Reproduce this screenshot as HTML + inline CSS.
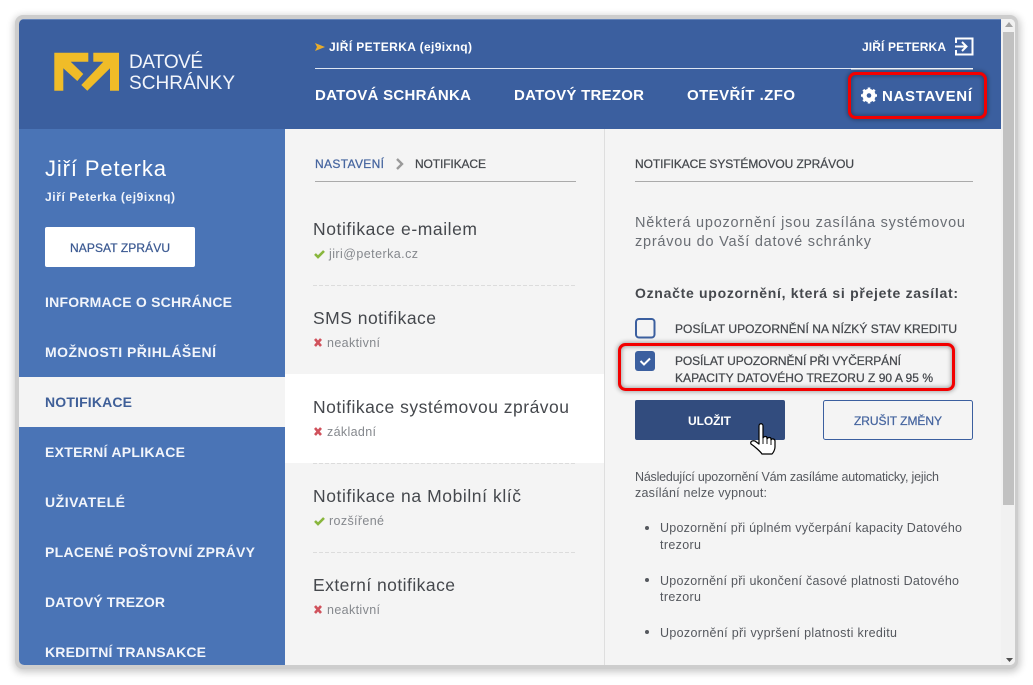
<!DOCTYPE html>
<html lang="cs"><head><meta charset="utf-8"><title>Notifikace</title>
<style>
html,body{margin:0;padding:0;background:#fff;width:1033px;height:685px;overflow:hidden}
svg{display:block;position:absolute;left:0;top:0}
text{font-family:"Liberation Sans",sans-serif;white-space:pre}
.b{font-weight:700}
.w{fill:#fff}
.nav{font-size:15px;font-weight:700;fill:#fff}
.menu{font-size:14px;font-weight:700;fill:#f2f5fb}
.item{font-size:17.5px;fill:#45484d}
.sub{font-size:12.5px;fill:#85888d}
.txt{font-size:12.5px;fill:#55585e}
.lab{font-size:12px;fill:#45484d;stroke:#45484d;stroke-width:.25px}
.m{stroke-width:.25px}
</style></head><body>
<svg width="1033" height="685" viewBox="0 0 1033 685" xmlns="http://www.w3.org/2000/svg">
<defs>
<filter id="sh" x="-5%" y="-5%" width="110%" height="110%"><feGaussianBlur stdDeviation="4"/></filter>
<filter id="rs" x="-20%" y="-30%" width="140%" height="160%"><feGaussianBlur stdDeviation="2.5"/></filter>
<clipPath id="win"><rect x="19" y="19" width="996" height="646" rx="5"/></clipPath>
</defs>
<rect x="14" y="16" width="1006" height="656" rx="9" fill="#000" opacity=".22" filter="url(#sh)"/>
<rect x="15" y="15" width="1003" height="654" rx="8" fill="#cdcdcd"/>
<g clip-path="url(#win)">
<rect x="19" y="19" width="996" height="646" fill="#f4f4f4"/>
<!-- header -->
<rect x="19" y="19" width="982" height="110" fill="#3b5f9f"/>
<rect x="19" y="19" width="982" height="1" fill="#6483b8"/>
<!-- sidebar -->
<rect x="19" y="129" width="266" height="536" fill="#4a74b6"/>
<rect x="19" y="377" width="266" height="50" fill="#f4f4f4"/>
<rect x="285" y="374" width="319" height="89" fill="#fff"/>
<rect x="604" y="129" width="1" height="536" fill="#dedede"/>
<!-- scrollbar -->
<rect x="1001" y="19" width="14" height="646" fill="#f1f1f1"/>
<rect x="1003" y="32" width="11" height="473" fill="#c1c1c1"/>
<path d="M1009 22l4 5h-8z" fill="#a3a3a3"/>
<path d="M1006 658h7l-3.500 4z" fill="#505050"/>
</g>
<!-- logo -->
<path fill="#f0bc28" d="M54.300 52.700H88.300V61.700H70.700L83.300 74L77.300 81L63.300 68.300V90.700H54.300Z"/>
<path fill="#f0bc28" d="M93.300 52.700H119V90.700H110V68.300L87.300 90.700L81.300 85L103.300 61.700H93.300Z"/>
<text x="129" y="68" font-size="19" fill="#f2f5fb" textLength="74">DATOVÉ</text>
<text x="129" y="89" font-size="19" fill="#f2f5fb" textLength="106">SCHRÁNKY</text>
<!-- top row -->
<path d="M315 43L325 47L315 51L317 47Z" fill="#e8ac2c"/>
<text x="329" y="51" font-size="12" class="b w" textLength="143">JIŘÍ PETERKA (ej9ixnq)</text>
<text x="862" y="51" font-size="12" class="b w" textLength="84">JIŘÍ PETERKA</text>
<path d="M956 43V38.500H972.500V54.500H956V50" fill="none" stroke="#fff" stroke-width="2"/>
<path d="M955 46.500H966M962 42L966.500 46.500L962 51" fill="none" stroke="#fff" stroke-width="2"/>
<rect x="315" y="68" width="536" height="1" fill="#dfe6f2"/>
<rect x="851" y="68" width="122" height="1.500" fill="#fff"/>
<text x="315" y="100" class="nav" textLength="156">DATOVÁ SCHRÁNKA</text>
<text x="514" y="100" class="nav" textLength="130">DATOVÝ TREZOR</text>
<text x="687" y="100" class="nav" textLength="108">OTEVŘÍT .ZFO</text>
<text x="882" y="101" class="nav" textLength="90">NASTAVENÍ</text>
<!-- gear -->
<circle cx="869" cy="95.500" r="5" fill="none" stroke="#fff" stroke-width="3.200"/>
<path d="M869 87.500V103.500M861 95.500H877M863.300 89.800L874.700 101.200M874.700 89.800L863.300 101.200" stroke="#fff" stroke-width="2.600"/>
<circle cx="869" cy="95.500" r="2.300" fill="#3b5f9f"/>
<!-- red box nav -->
<rect x="849.500" y="73.500" width="136" height="44" rx="6" fill="none" stroke="#000" stroke-opacity=".4" stroke-width="4" filter="url(#rs)"/>
<rect x="849.500" y="73.500" width="136" height="44" rx="6" fill="none" stroke="#f30000" stroke-width="3"/>
<!-- sidebar text -->
<text x="45" y="176" font-size="22" fill="#fff" textLength="121">Jiří Peterka</text>
<text x="45" y="201" font-size="12" class="b" fill="#f2f5fb" textLength="130">Jiří Peterka (ej9ixnq)</text>
<rect x="45" y="227" width="150" height="40" rx="2" fill="#fff"/>
<text x="70" y="252" font-size="12" class="m" fill="#3c5a92" stroke="#3c5a92" textLength="100">NAPSAT ZPRÁVU</text>
<text x="45" y="307" class="menu" textLength="187">INFORMACE O SCHRÁNCE</text>
<text x="45" y="357" class="menu" textLength="171">MOŽNOSTI PŘIHLÁŠENÍ</text>
<text x="45" y="407" class="menu" style="fill:#3f5f98" textLength="87">NOTIFIKACE</text>
<text x="45" y="457" class="menu" textLength="140">EXTERNÍ APLIKACE</text>
<text x="45" y="507" class="menu" textLength="80">UŽIVATELÉ</text>
<text x="45" y="557" class="menu" textLength="210">PLACENÉ POŠTOVNÍ ZPRÁVY</text>
<text x="45" y="607" class="menu" textLength="120">DATOVÝ TREZOR</text>
<text x="45" y="657" class="menu" textLength="161">KREDITNÍ TRANSAKCE</text>
<!-- breadcrumb -->
<text x="315" y="168" font-size="12" class="m" fill="#46659f" stroke="#46659f" textLength="69">NASTAVENÍ</text>
<path d="M397 159L402 164L397 169" fill="none" stroke="#9a9a9a" stroke-width="2.400"/>
<text x="415" y="168" font-size="12" class="m" fill="#45484d" stroke="#45484d" textLength="71">NOTIFIKACE</text>
<rect x="315" y="181" width="261" height="1" fill="#aaa"/>
<!-- list -->
<text x="313" y="235" class="item" textLength="164">Notifikace e-mailem</text>
<path d="M315 254L318 257L324 251" fill="none" stroke="#88b63c" stroke-width="2.600"/>
<text x="329" y="258" class="sub" textLength="89">jiri@peterka.cz</text>
<path d="M313 285.500H576" stroke="#dcdcdc" stroke-dasharray="4 2"/>
<text x="313" y="324" class="item" textLength="123">SMS notifikace</text>
<path d="M315 339L321 346M321 339L315 346" stroke="#d0525c" stroke-width="2.600"/>
<text x="327" y="347" class="sub" textLength="53">neaktivní</text>
<text x="313" y="413" class="item" textLength="256">Notifikace systémovou zprávou</text>
<path d="M315 428L321 435M321 428L315 435" stroke="#d0525c" stroke-width="2.600"/>
<text x="327" y="436" class="sub" textLength="49">základní</text>
<path d="M313 463.500H576" stroke="#dcdcdc" stroke-dasharray="4 2"/>
<text x="313" y="502" class="item" textLength="208">Notifikace na Mobilní klíč</text>
<path d="M315 521L318 524L324 518" fill="none" stroke="#88b63c" stroke-width="2.600"/>
<text x="329" y="525" class="sub" textLength="55">rozšířené</text>
<path d="M313 552.500H576" stroke="#dcdcdc" stroke-dasharray="4 2"/>
<text x="313" y="591" class="item" textLength="142">Externí notifikace</text>
<path d="M315 606L321 613M321 606L315 613" stroke="#d0525c" stroke-width="2.600"/>
<text x="327" y="614" class="sub" textLength="53">neaktivní</text>
<!-- right -->
<text x="635" y="168" font-size="12" class="m" fill="#45484d" stroke="#45484d" textLength="219">NOTIFIKACE SYSTÉMOVOU ZPRÁVOU</text>
<rect x="635" y="181" width="338" height="1" fill="#aaa"/>
<text x="635" y="227" font-size="14.500" fill="#6a6e74" textLength="330">Některá upozornění jsou zasílána systémovou</text>
<text x="635" y="246" font-size="14.500" fill="#6a6e74" textLength="236">zprávou do Vaší datové schránky</text>
<text x="635" y="298" font-size="14" class="b" fill="#45484d" textLength="323">Označte upozornění, která si přejete zasílat:</text>
<rect x="636" y="319" width="18.500" height="18.500" rx="3" fill="none" stroke="#3b5f9f" stroke-width="2"/>
<text x="675" y="333" class="lab" textLength="282">POSÍLAT UPOZORNĚNÍ NA NÍZKÝ STAV KREDITU</text>
<rect x="635" y="351" width="20" height="20" rx="3" fill="#3b5f9f"/>
<path d="M640.500 361L644 364.500L650 358.500" fill="none" stroke="#fff" stroke-width="2"/>
<text x="675" y="365" class="lab" textLength="226">POSÍLAT UPOZORNĚNÍ PŘI VYČERPÁNÍ</text>
<text x="675" y="382" class="lab" textLength="258">KAPACITY DATOVÉHO TREZORU Z 90 A 95 %</text>
<rect x="619.500" y="344.500" width="334" height="45" rx="6" fill="none" stroke="#000" stroke-opacity=".4" stroke-width="4" filter="url(#rs)"/>
<rect x="619.500" y="344.500" width="334" height="45" rx="6" fill="none" stroke="#f30000" stroke-width="3"/>
<rect x="635" y="400" width="150" height="40" rx="2" fill="#324c7e"/>
<text x="688" y="425" font-size="12" class="b w" textLength="43">ULOŽIT</text>
<rect x="823.500" y="400.500" width="149" height="39" rx="2" fill="none" stroke="#3b5f9f"/>
<text x="854" y="425" font-size="12" class="m" fill="#46659f" stroke="#46659f" textLength="88">ZRUŠIT ZMĚNY</text>
<text x="635" y="481" class="txt" textLength="304">Následující upozornění Vám zasíláme automaticky, jejich</text>
<text x="635" y="497" class="txt" textLength="132">zasílání nelze vypnout:</text>
<circle cx="647" cy="528" r="2" fill="#55585e"/>
<text x="660" y="532" class="txt" textLength="302">Upozornění při úplném vyčerpání kapacity Datového</text>
<text x="660" y="549" class="txt" textLength="41">trezoru</text>
<circle cx="647" cy="580" r="2" fill="#55585e"/>
<text x="660" y="585" class="txt" textLength="299">Upozornění při ukončení časové platnosti Datového</text>
<text x="660" y="601" class="txt" textLength="41">trezoru</text>
<circle cx="647" cy="632" r="2" fill="#55585e"/>
<text x="660" y="637" class="txt" textLength="237">Upozornění při vypršení platnosti kreditu</text>
<!-- hand cursor -->
<path d="M759 426c0-3 4-3 4 0v12c1-2 4-2 4 0v1c1-2 4-2 4 0v1c1-2 4-1 4 1v6c0 3-2 6-3 7h-10c-2-3-8-8-11-10c-1-2 1-4 4-3l4 3z" fill="#fff" stroke="#000" stroke-width="1.200" stroke-linejoin="round"/>
<path d="M763 438v6M767 439v5M771 440v5" stroke="#000" stroke-width=".9"/>
</svg>
</body></html>
